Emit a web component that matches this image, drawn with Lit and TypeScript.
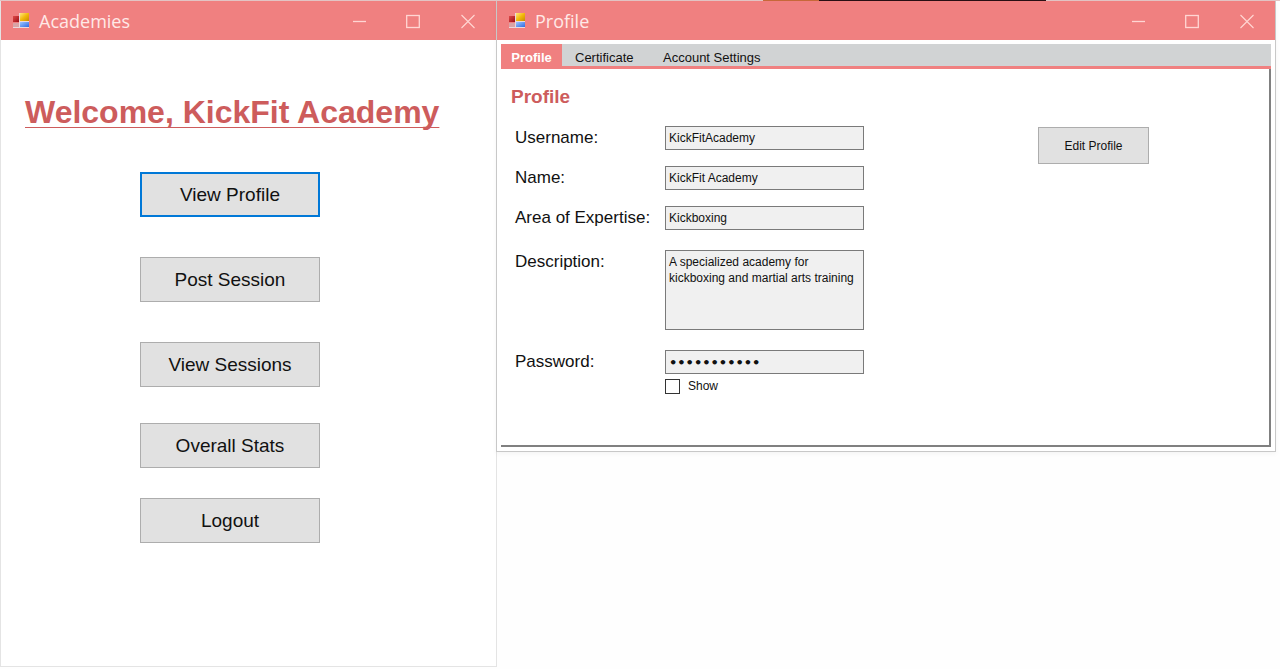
import { LitElement, html, css, svg } from "lit";
import { customElement, property, state } from "lit/decorators.js";

/** A desktop window: title bar with its three controls, and a slotted body. */
@customElement("app-window")
class AppWindow extends LitElement {
  @property() caption = "";

  static styles = css`
    :host {
      display: flex;
      flex-direction: column;
      box-sizing: border-box;
      background: #ffffff;
      border: 1px solid #dcdcdc;
      border-top: 0;
    }
    .titlebar {
      display: flex;
      align-items: center;
      height: 39px;
      padding-right: 1px;
      background: #f08080;
      color: #ffe9e7;
    }
    .icon {
      margin: 0 9px 0 11px;
      flex: none;
    }
    .caption {
      flex: 1;
      margin: 0;
      font: 400 18px/24px "Open Sans", "Noto Sans", sans-serif;
    }
    .control {
      display: grid;
      place-items: center;
      width: 54px;
      height: 39px;
      padding: 0;
      border: 0;
      background: none;
      color: #ffd6d3;
    }
    .control:hover {
      background: #e87474;
    }
  `;

  private control(label: string, shape: unknown) {
    return html`<button class="control" type="button" aria-label=${label}>
      <svg width="16" height="16" viewBox="0 0 16 16" fill="none" stroke="currentColor">${shape}</svg>
    </button>`;
  }

  render() {
    return html`
      <header class="titlebar">
        <svg class="icon" width="18" height="18" viewBox="0 0 18 18" aria-hidden="true">
          <defs>
            <linearGradient id="gold" x2="1" y2="1">
              <stop offset="0" stop-color="#ffe680" /><stop offset="0.5" stop-color="#f2b90c" /><stop offset="1" stop-color="#c98a00" />
            </linearGradient>
            <linearGradient id="blue" x2="1" y2="1">
              <stop offset="0" stop-color="#9cc4ff" /><stop offset="1" stop-color="#2f6be0" />
            </linearGradient>
            <linearGradient id="red" x2="1" y2="1">
              <stop offset="0" stop-color="#e04a48" /><stop offset="1" stop-color="#9c1018" />
            </linearGradient>
          </defs>
          <rect x="1" y="11" width="7" height="5" fill="#d9a3a5" />
          <rect x="1" y="4" width="6" height="6" fill="url(#red)" />
          <rect x="8" y="1" width="9" height="8" fill="url(#gold)" />
          <rect x="8" y="10" width="9" height="5" fill="url(#blue)" />
          <path d="M7.5 1v14M7 9.5h10M1 15.5h16" stroke="#ead8dc" fill="none" />
        </svg>
        <h2 class="caption">${this.caption}</h2>
        ${this.control("Minimize", svg`<path d="M1 8.5h13" stroke-width="1.3" />`)}
        ${this.control("Maximize", svg`<rect x="0.700" y="2.500" width="12.600" height="12" stroke-width="1.3" />`)}
        ${this.control("Close", svg`<path d="M1.500 2 14.500 15M14.500 2 1.500 15" stroke-width="1.1" />`)}
      </header>
      <slot></slot>
    `;
  }
}

@customElement("academy-menu")
class AcademyMenu extends LitElement {
  static styles = css`
    :host {
      display: block;
      padding: 54px 24px;
      font-family: "Liberation Sans", Arial, sans-serif;
    }
    .welcome {
      margin: 0;
      color: #cd5c5c;
      font-size: 32px;
      line-height: 36px;
      text-decoration: underline 1px #cd5c5c;
      text-decoration-skip-ink: none;
      text-underline-offset: 4px;
      white-space: nowrap;
    }
    .menu {
      display: flex;
      flex-direction: column;
      gap: 40px;
      width: 180px;
      margin: 42px 0 0 115px;
    }
    .actions {
      display: flex;
      flex-direction: column;
      gap: 30px;
      margin-top: -4px;
    }
    .item {
      height: 45px;
      padding: 0;
      border: 1px solid #adadad;
      background: #e1e1e1;
      color: #111111;
      font: 19px/22px "Liberation Sans", Arial, sans-serif;
    }
    .current {
      border: 2px solid #0078d7;
    }
  `;

  render() {
    return html`
      <h1 class="welcome">Welcome, KickFit Academy</h1>
      <nav class="menu">
        <button class="item current" type="button">View Profile</button>
        <button class="item" type="button">Post Session</button>
        <button class="item" type="button">View Sessions</button>
        <div class="actions">
          <button class="item" type="button">Overall Stats</button>
          <button class="item" type="button">Logout</button>
        </div>
      </nav>
    `;
  }
}

@customElement("profile-panel")
class ProfilePanel extends LitElement {
  @state() private revealed = false;
  @state() private tab = "Profile";

  static styles = css`
    :host {
      display: block;
      padding: 4px;
      color: #111111;
      font-family: "Liberation Sans", Arial, sans-serif;
      font-size: 12px;
    }
    .tabs {
      display: flex;
      background: #d1d3d4;
      border-bottom: 3px solid #f08080;
    }
    .tab {
      height: 22px;
      min-width: 61px;
      padding: 5px 8px 0;
      border: 0;
      background: none;
      color: #111111;
      font: 13px/17px "Liberation Sans", Arial, sans-serif;
    }
    .tab + .tab {
      min-width: 88px;
      padding: 5px 13px 0;
      text-align: left;
    }
    .tab.active {
      background: #f08080;
      color: #ffffff;
      font-weight: 700;
    }
    .page {
      padding: 16px 120px 51px 10px;
      border-right: 2px solid #808080;
      border-bottom: 2px solid #808080;
    }
    .heading {
      margin: 0 0 17px;
      color: #cd5c5c;
      font-size: 19px;
      line-height: 24px;
    }
    .content {
      display: flex;
      align-items: flex-start;
      justify-content: space-between;
    }
    .form {
      display: grid;
      grid-template-columns: 150px 199px;
      row-gap: 16px;
      padding-left: 4px;
    }
    .label {
      font-size: 17px;
      line-height: 24px;
      white-space: nowrap;
    }
    .field {
      box-sizing: border-box;
      width: 100%;
      height: 24px;
      margin: 0;
      padding: 0 3px;
      border: 1px solid #7a7a7a;
      border-radius: 0;
      background: #f0f0f0;
      color: #111111;
      font: 12px/16px "Liberation Sans", Arial, sans-serif;
    }
    .secret {
      font-family: "DejaVu Sans", sans-serif;
      font-size: 13px;
      font-weight: 700;
    }
    .area {
      display: block;
      height: 80px;
      padding: 3px;
      resize: none;
      overflow: hidden;
    }
    .spaced {
      margin-top: 4px;
    }
    .show {
      display: flex;
      align-items: center;
      gap: 8px;
      margin-top: 4px;
      line-height: 16px;
    }
    .tick {
      appearance: none;
      width: 15px;
      height: 15px;
      margin: 0;
      border: 1px solid #333333;
      background: #ffffff;
    }
    .tick:checked {
      background: #333333;
      box-shadow: inset 0 0 0 3px #ffffff;
    }
    .edit {
      width: 111px;
      height: 37px;
      margin-top: 1px;
      padding: 0;
      border: 1px solid #adadad;
      background: #e1e1e1;
      color: #111111;
      font: 12px/16px "Liberation Sans", Arial, sans-serif;
    }
  `;

  render() {
    return html`
      <div class="tabs" role="tablist">
        ${["Profile", "Certificate", "Account Settings"].map(
          (name) => html`<button
            class="tab ${name === this.tab ? "active" : ""}"
            type="button"
            role="tab"
            aria-selected=${name === this.tab}
            @click=${() => (this.tab = name)}
          >${name}</button>`
        )}
      </div>
      <section class="page">
        <h3 class="heading">Profile</h3>
        <div class="content">
          <form class="form">
            <label class="label" for="username">Username:</label>
            <input class="field" id="username" readonly .value=${"KickFitAcademy"} />
            <label class="label" for="name">Name:</label>
            <input class="field" id="name" readonly .value=${"KickFit Academy"} />
            <label class="label" for="expertise">Area of Expertise:</label>
            <input class="field" id="expertise" readonly .value=${"Kickboxing"} />
            <label class="label spaced" for="description">Description:</label>
            <div class="spaced">
              <textarea class="field area" id="description" readonly
                .value=${"A specialized academy for kickboxing and martial arts training"}></textarea>
            </div>
            <label class="label spaced" for="password">Password:</label>
            <div class="spaced">
              <input class="field ${this.revealed ? "" : "secret"}" id="password" readonly
                type=${this.revealed ? "text" : "password"} .value=${"kickfit1234"} />
              <label class="show">
                <input class="tick" type="checkbox" .checked=${this.revealed}
                  @change=${() => (this.revealed = !this.revealed)} />
                Show
              </label>
            </div>
          </form>
          <button class="edit" type="button">Edit Profile</button>
        </div>
      </section>
    `;
  }
}

@customElement("app-root")
class AppRoot extends LitElement {
  static styles = css`
    :host {
      display: block;
      min-height: 100vh;
      background: #fefefe;
    }
    .edge {
      display: grid;
      grid-template-columns: 763fr 56fr 227fr 234fr;
      height: 1px;
      background: #e3c4c4;
    }
    .amber {
      grid-column: 2;
      background: #c8693a;
    }
    .dark {
      background: #2a1014;
    }
    .desktop {
      display: grid;
      grid-template-columns: 496fr 780fr;
      align-items: start;
      padding-right: 4px;
    }
    .academies {
      min-height: calc(100vh - 3px);
      margin-right: -1px;
      border-color: #e4e4e4;
    }
    .profile {
      border-color: #c8c8c8;
      box-shadow: 0 2px 5px rgba(0, 0, 0, 0.04);
    }
  `;

  render() {
    return html`
      <div class="edge"><span class="amber"></span><span class="dark"></span></div>
      <main class="desktop">
        <app-window class="academies" caption="Academies"><academy-menu></academy-menu></app-window>
        <app-window class="profile" caption="Profile"><profile-panel></profile-panel></app-window>
      </main>
    `;
  }
}
